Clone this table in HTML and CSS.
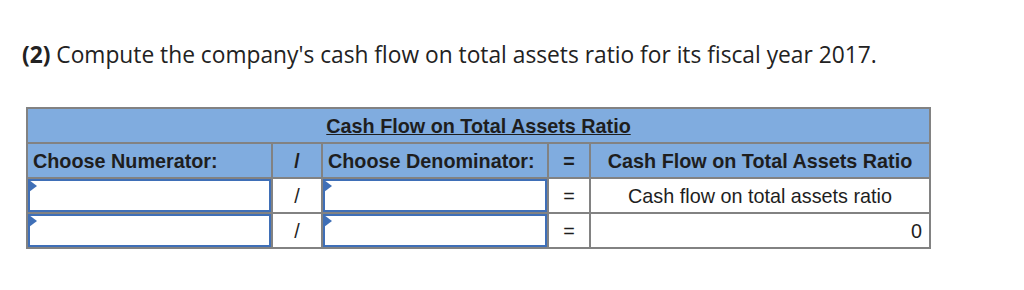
FILE: index.html
```html
<!DOCTYPE html>
<html>
<head>
<meta charset="utf-8">
<link rel="stylesheet" href="styles.css">
</head>
<body>
<div class="page">
  <p class="question"><b>(2)</b> Compute the company's cash flow on total assets ratio for its fiscal year 2017.</p>
  <table class="ratio">
    <colgroup>
      <col class="c-num"><col class="c-div"><col class="c-den"><col class="c-eq"><col class="c-res">
    </colgroup>
    <tr class="head">
      <th colspan="5" class="title"><span>Cash Flow on Total Assets Ratio</span></th>
    </tr>
    <tr class="head">
      <th class="left">Choose Numerator:</th>
      <th>/</th>
      <th class="left">Choose Denominator:</th>
      <th>=</th>
      <th>Cash Flow on Total Assets Ratio</th>
    </tr>
    <tr>
      <td class="inp"><div class="box"></div></td>
      <td class="op">/</td>
      <td class="inp"><div class="box"></div></td>
      <td class="op">=</td>
      <td class="center">Cash flow on total assets ratio</td>
    </tr>
    <tr>
      <td class="inp"><div class="box"></div></td>
      <td class="op">/</td>
      <td class="inp"><div class="box"></div></td>
      <td class="op">=</td>
      <td class="right">0</td>
    </tr>
  </table>
</div>
</body>
</html>
```
FILE: styles.css
```css
html, body {
  margin: 0;
  padding: 0;
  background: #fff;
}
.page {
  padding: 40px 0 0 22px;
}
.question {
  margin: 0 0 38px 0;
  font-family: "Open Sans", "Liberation Sans", sans-serif;
  font-size: 22.75px;
  line-height: 29px;
  color: #222;
}
.question b {
  font-weight: 700;
}
.ratio {
  margin-left: 4px;
  border-collapse: collapse;
  table-layout: fixed;
  width: 903px;
  font-family: "Liberation Sans", Arial, sans-serif;
  font-size: 19.8px;
  color: #1e1e1e;
  border: 2px solid #7b7b7b;
}
.c-num { width: 245px; }
.c-div { width: 50px; }
.c-den { width: 226px; }
.c-eq { width: 42px; }
.c-res { width: 340px; }
.ratio th, .ratio td {
  height: 32px;
  border: 2px solid #828282;
  padding: 1px 6px 0 6px;
  text-align: center;
  vertical-align: middle;
  white-space: nowrap;
}
.ratio tr.head th {
  background: #80acdf;
  font-weight: 700;
}
.ratio th.left {
  text-align: left;
  padding-left: 5px;
}
.ratio th.title span {
  text-decoration: underline;
}
.ratio td.op {
  background: #fff;
}
.ratio td.center {
  text-align: center;
}
.ratio td.right {
  text-align: right;
  padding-right: 7px;
}
.ratio td.inp {
  padding: 0;
}
.box {
  position: relative;
  height: 29px;
  border: 2px solid #3f6fb7;
  background: #fff;
}
.box::before {
  content: "";
  position: absolute;
  left: -1px;
  top: -1px;
  width: 0;
  height: 0;
  border-top: 6px solid transparent;
  border-bottom: 6px solid transparent;
  border-left: 8px solid #3f6fb7;
}
```
